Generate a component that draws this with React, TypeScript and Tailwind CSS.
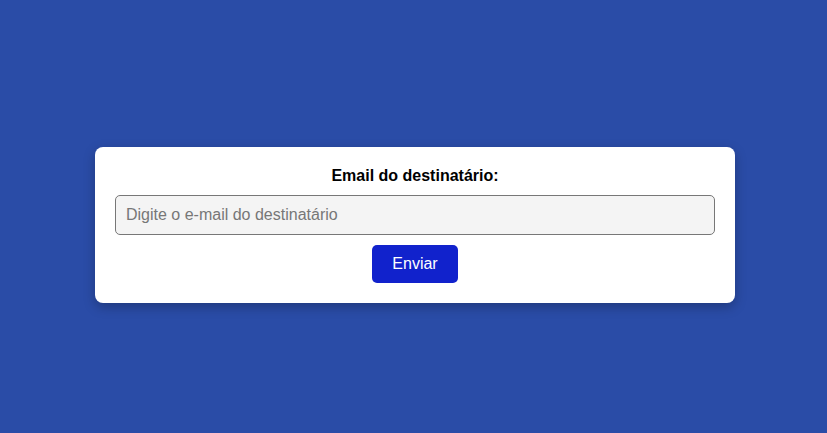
export default function App() {
  return (
    <div className="flex min-h-screen w-full flex-col items-center bg-[#2a4ca7] pt-[147px] pl-[3px] font-['Liberation_Sans',Arial,sans-serif]">
      <form
        className="flex w-[640px] flex-col items-center rounded-lg bg-white p-5 shadow-[0_4px_12px_rgba(0,0,0,0.25)]"
        onSubmit={(e) => e.preventDefault()}
      >
        <label htmlFor="email" className="text-base font-bold leading-[18px] text-black">
          Email do destinatário:
        </label>
        <input
          id="email"
          type="email"
          placeholder="Digite o e-mail do destinatário"
          className="mt-[10px] h-10 w-full rounded-[5px] border border-[#777] bg-[#f4f4f4] px-[10px] text-base text-black outline-none placeholder:text-[#777]"
        />
        <button
          type="submit"
          className="mt-[10px] h-[38px] w-[86px] rounded-[5px] bg-[#1122cc] text-base text-white"
        >
          Enviar
        </button>
      </form>
    </div>
  )
}
